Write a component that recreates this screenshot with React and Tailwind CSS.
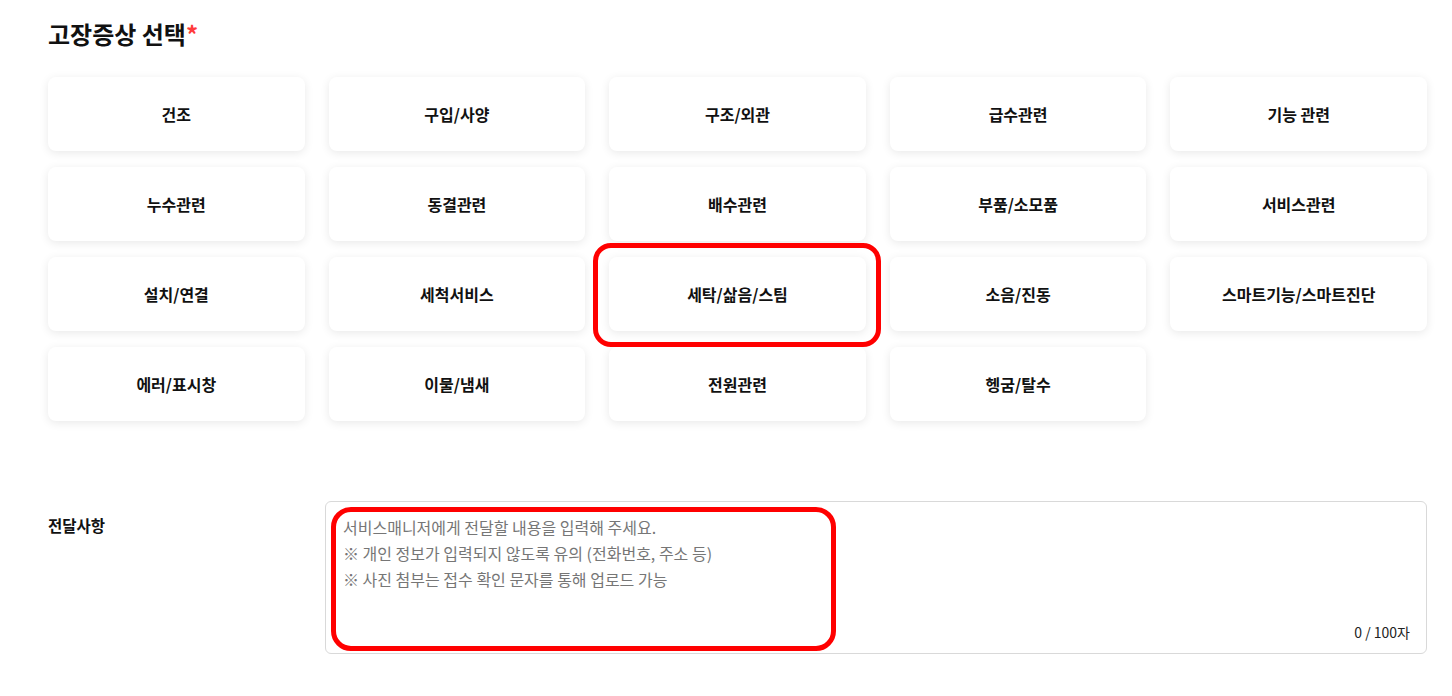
const symptoms = [
  "건조",
  "구입/사양",
  "구조/외관",
  "급수관련",
  "기능 관련",
  "누수관련",
  "동결관련",
  "배수관련",
  "부품/소모품",
  "서비스관련",
  "설치/연결",
  "세척서비스",
  "세탁/삶음/스팀",
  "소음/진동",
  "스마트기능/스마트진단",
  "에러/표시창",
  "이물/냄새",
  "전원관련",
  "헹굼/탈수",
];

function SymptomCard({ label }) {
  return (
    <button
      type="button"
      className="flex h-[74px] items-center justify-center rounded-[8px] bg-white text-[16px] font-bold text-[#111] shadow-[0_2px_10px_rgba(0,0,0,0.09)]"
    >
      {label}
    </button>
  );
}

export default function App() {
  return (
    <div
      className="relative min-h-[696px] bg-white pl-[48px] pr-[25px] pt-[17px]"
      style={{ fontFamily: '"Noto Sans CJK KR", "Noto Sans", sans-serif' }}
    >
      <h2 className="text-[24px] font-bold leading-[33px] text-[#111]">
        고장증상 선택<span className="text-[#ff3b3b]">*</span>
      </h2>

      <div className="mt-[27px] grid grid-cols-5 gap-x-[24px] gap-y-[16px]">
        {symptoms.map((item) => (
          <SymptomCard key={item} label={item} />
        ))}
      </div>

      <div className="mt-[80px] grid grid-cols-[277px_1fr]">
        <p className="pt-[12px] text-[15.5px] font-bold leading-[24px] text-[#111]">전달사항</p>
        <div className="relative h-[153px] rounded-[6px] border border-[#d9d9d9]">
          <div className="px-[17px] pt-[12px] text-[16px] leading-[26px] text-[#767676]">
            <p>서비스매니저에게 전달할 내용을 입력해 주세요.</p>
            <p>※ 개인 정보가 입력되지 않도록 유의 (전화번호, 주소 등)</p>
            <p>※ 사진 첨부는 접수 확인 문자를 통해 업로드 가능</p>
          </div>
          <span className="absolute bottom-[10px] right-[16px] text-[14px] text-[#222]">0 / 100자</span>
        </div>
      </div>

      <div className="pointer-events-none absolute left-[593px] top-[243px] h-[104px] w-[288px] rounded-[18px] border-[5px] border-[#ff0000]" />
      <div className="pointer-events-none absolute left-[331px] top-[507px] h-[144px] w-[505px] rounded-[20px] border-[5px] border-[#ff0000]" />
    </div>
  );
}
